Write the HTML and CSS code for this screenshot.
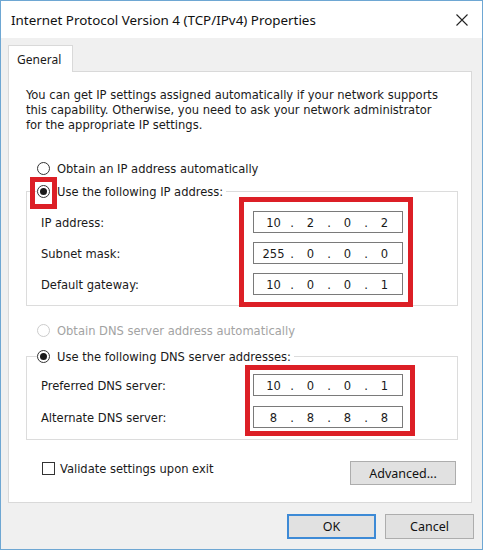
FILE: index.html
```html
<!DOCTYPE html>
<html>
<head>
<meta charset="utf-8">
<link rel="stylesheet" href="styles.css">
</head>
<body>
<div class="window">
  <div class="titlebar">
    <span class="title">Internet Protocol Version 4 (TCP/IPv4) Properties</span>
    <svg class="close" width="12" height="12" viewBox="0 0 12 12"><path d="M0.5 0.5 L11.5 11.5 M11.5 0.5 L0.5 11.5" stroke="#222" stroke-width="1.1" fill="none"/></svg>
  </div>
  <div class="body">
    <div class="tabs">
      <div class="tab">General</div>
      <div class="tab-fill"></div>
    </div>
    <div class="panel">
      <p class="desc">You can get IP settings assigned automatically if your network supports<br>this capability. Otherwise, you need to ask your network administrator<br>for the appropriate IP settings.</p>

      <div class="radio-row first">
        <span class="radio"></span><span>Obtain an IP address automatically</span>
      </div>
      <fieldset class="group group-ip">
        <legend class="radio-row"><span class="radio checked"></span><span>Use the following IP address:</span></legend>
        <div class="field-row">
          <span class="label">IP address:</span>
          <div class="ip"><span>10</span><i>.</i><span>2</span><i>.</i><span>0</span><i>.</i><span>2</span></div>
        </div>
        <div class="field-row">
          <span class="label">Subnet mask:</span>
          <div class="ip"><span>255</span><i>.</i><span>0</span><i>.</i><span>0</span><i>.</i><span>0</span></div>
        </div>
        <div class="field-row">
          <span class="label">Default gateway:</span>
          <div class="ip"><span>10</span><i>.</i><span>0</span><i>.</i><span>0</span><i>.</i><span>1</span></div>
        </div>
      </fieldset>

      <div class="radio-row disabled">
        <span class="radio"></span><span>Obtain DNS server address automatically</span>
      </div>
      <fieldset class="group group-dns">
        <legend class="radio-row"><span class="radio checked"></span><span>Use the following DNS server addresses:</span></legend>
        <div class="field-row">
          <span class="label">Preferred DNS server:</span>
          <div class="ip"><span>10</span><i>.</i><span>0</span><i>.</i><span>0</span><i>.</i><span>1</span></div>
        </div>
        <div class="field-row">
          <span class="label">Alternate DNS server:</span>
          <div class="ip"><span>8</span><i>.</i><span>8</span><i>.</i><span>8</span><i>.</i><span>8</span></div>
        </div>
      </fieldset>

      <div class="bottom-row">
        <div class="check"><span class="box"></span><span>Validate settings upon exit</span></div>
        <div class="btn adv">Advanced...</div>
      </div>

      <div class="mark mark-radio"></div>
      <div class="mark mark-ip"></div>
      <div class="mark mark-dns"></div>
    </div>
    <div class="actions">
      <div class="btn ok">OK</div>
      <div class="btn cancel">Cancel</div>
    </div>
  </div>
</div>
</body>
</html>
```
FILE: styles.css
```css
* { box-sizing: border-box; }
html, body { margin: 0; padding: 0; }
body {
  width: 483px;
  height: 550px;
  background: #ffffff;
  font-family: "DejaVu Sans Condensed", "DejaVu Sans", sans-serif;
  font-size: 12.8px;
  color: #1a1a1a;
}
.window {
  width: 483px;
  height: 550px;
  border: 1px solid #6ea7d3;
  display: flex;
  flex-direction: column;
  background: #f0f0f0;
}
.titlebar {
  height: 37px;
  background: #ffffff;
  display: flex;
  align-items: center;
  padding-left: 10px;
  padding-right: 14px;
}
.title {
  flex: 1;
  font-family: "Noto Sans", "Open Sans", sans-serif;
  font-size: 13.4px;
  color: #111;
}
.close { display: block; }
.body {
  flex: 1;
  padding: 7px 10px 0 7px;
}
.tabs {
  display: flex;
  height: 27px;
}
.tab {
  width: 65px;
  background: #ffffff;
  border: 1px solid #d9d9d9;
  border-bottom: none;
  padding-left: 8px;
  padding-top: 5px;
  font-family: "Noto Sans", "Open Sans", sans-serif;
  font-size: 12px;
}
.tab-fill {
  flex: 1;
  border-bottom: 1px solid #d9d9d9;
}
.panel {
  position: relative;
  background: #ffffff;
  border: 1px solid #d9d9d9;
  border-top: none;
  padding: 15px 13px 17px 17px;
}
.desc {
  margin: 0;
  line-height: 15px;
  white-space: nowrap;
}
.radio-row {
  display: flex;
  align-items: center;
  height: 20px;
  margin-left: 11px;
  gap: 7px;
}
.radio-row.first { margin-top: 26px; }
.radio {
  width: 13px;
  height: 13px;
  border: 1px solid #333333;
  border-radius: 50%;
  background: #ffffff;
  display: flex;
  align-items: center;
  justify-content: center;
  flex: none;
}
.radio.checked::after {
  content: "";
  width: 7px;
  height: 7px;
  border-radius: 50%;
  background: #1a1a1a;
}
.disabled { color: #a3a3a3; margin-top: 14px; }
.disabled .radio { border-color: #cccccc; }
.group {
  margin: 0;
  padding: 0 0 10px 0;
  border: 1px solid #dcdcdc;
  min-width: 0;
}
.group legend {
  padding: 0 3px 0 0;
  margin-left: 10px;
}
.group-ip { margin-top: 3px; }
.group-dns { margin-top: 6px; padding-bottom: 11px; }
.field-row {
  display: flex;
  align-items: center;
  margin-left: 14px;
  height: 22px;
}
.group-ip .field-row { margin-top: 9px; }
.group-ip .field-row:first-of-type { margin-top: 10px; }
.group-dns .field-row { margin-top: 10px; }
.group-dns .field-row:first-of-type { margin-top: 8px; }
.label { width: 212px; }
.ip {
  width: 150px;
  height: 22px;
  border: 1px solid #7a7a7a;
  background: #ffffff;
  display: grid;
  grid-template-columns: 29px 8px 29px 8px 29px 8px 29px;
  padding-left: 5px;
  align-items: center;
}
.ip span, .ip i {
  text-align: center;
  font-style: normal;
}
.bottom-row {
  display: flex;
  justify-content: space-between;
  align-items: flex-start;
  margin-top: 18px;
}
.check {
  display: flex;
  align-items: center;
  height: 20px;
  margin-left: 16px;
  gap: 5px;
}
.box {
  width: 13px;
  height: 13px;
  border: 1px solid #333333;
  background: #ffffff;
}
.btn {
  height: 24px;
  background: #e1e1e1;
  border: 1px solid #adadad;
  display: flex;
  align-items: center;
  justify-content: center;
  font-family: "Noto Sans", "Open Sans", sans-serif;
  font-size: 12.5px;
  color: #111;
}
.adv {
  width: 106px;
  margin-top: 3px;
  margin-right: 2px;
}
.actions {
  display: flex;
  justify-content: flex-end;
  gap: 9px;
  margin-top: 11px;
  margin-right: -2px;
}
.actions .btn { width: 89px; height: 25px; }
.ok { border: 2px solid #3d8ad6; }
.mark {
  position: absolute;
  border: 5px solid #dc1f26;
}
.mark-radio { left: 21px; top: 105px; width: 27px; height: 32px; }
.mark-ip { left: 230px; top: 125px; width: 174px; height: 110px; }
.mark-dns { left: 236px; top: 293px; width: 170px; height: 71px; }
```
